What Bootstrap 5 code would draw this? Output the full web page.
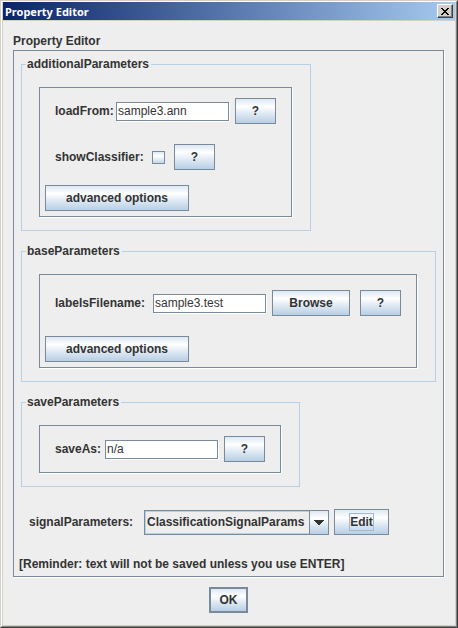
<!DOCTYPE html>
<html lang="en">
<head>
<meta charset="utf-8">
<meta name="viewport" content="width=device-width, initial-scale=1">
<title>Property Editor</title>
<link href="https://cdn.jsdelivr.net/npm/bootstrap@5.3.0/dist/css/bootstrap.min.css" rel="stylesheet">
<style>
:root { --line: #7a8a99; --soft: #b8cfe5; --face: #eeeeee; --ink: #333333; }
body { background: var(--face); color: var(--ink); font: 700 12px/17px "Liberation Sans", Arial, sans-serif; }
.window { border: 1px solid; border-color: #d4d0c8 #404040 #404040 #d4d0c8; }
.window-bevel { border: 1px solid; border-color: #fff #808080 #808080 #fff; }
.window-frame { border: solid #d4d0c8; border-width: 0 1px 1px 1px; }
.titlebar { height: 19px; padding: 0 2px; border-bottom: 1px solid #d4d0c8; background: linear-gradient(90deg, #0a246a, #a6caf0); color: #fff; }
.titlebar h1 { font: 700 11px/17px "Noto Sans", "Open Sans", sans-serif; }
.close-btn { width: 16px; height: 14px; background: #d4d0c8; border: 1px solid; border-color: #fff #404040 #404040 #fff; box-shadow: inset -1px -1px 0 #808080; }
.client { padding: 12px 11px 12px 10px; }
.sunken { border: 1px solid var(--line); box-shadow: 1px 1px 0 #fff; }
.editor { padding: 5px 7px 3px; margin-bottom: 10px; }
.group { border: 1px solid var(--soft); padding: 0 4px 13px; margin-bottom: 12px; width: fit-content; }
.group legend { float: none; width: auto; margin: 0; padding: 0 2px 0 1px; font-size: 12px; line-height: 17px; }
.group-body { margin: 14px 14px 0 13px; padding: 10px 15px; }
.group-body.tall { padding: 15px 15px 5px; }
.group-body.has-more { padding-bottom: 5px; }
.group-body label, .signal label { padding-top: 1px; }
.more { margin: 0 0 0 -10px; width: 144px; }
.jbtn { height: 26px; padding: 0; border: 1px solid var(--line); border-radius: 0; color: var(--ink); font: inherit; background: linear-gradient(#dde8f3 0, #fff 32%, #dde8f3 62%, #b8cfe5 100%); }
.help { width: 41px; }
.browse { width: 78px; }
.edit { width: 55px; }
.edit span { display: inline-block; height: 18px; line-height: 18px; outline: 1px solid #a3b8cc; outline-offset: -1px; padding: 0 1px; }
.ok { width: 39px; border-width: 2px; }
.field { width: 113px; height: 19px; padding: 0 1px; border-radius: 0; background: #fff; color: var(--ink); font: 400 12px/17px "Liberation Sans", Arial, sans-serif; outline: 0; }
.gap-field { gap: 6px; }
.row-gap { margin-bottom: 20px; }
.row-near { margin-bottom: 15px; }
.lbl-s { width: 50px; }
.lbl-m { width: 61px; }
.lbl-check { width: 97px; }
.lbl-l { width: 98px; }
.lbl-xl { width: 110px; }
.tick { appearance: none; width: 13px; height: 13px; margin: 0 9px 0 0; border: 1px solid var(--line); background: linear-gradient(#dde8f3, #fff 35%, #c5d8ea); }
.tick:checked { background: var(--line); }
.signal { padding: 0 0 0 8px; margin: 22px 0 21px; gap: 5px; }
.combo { width: 185px; height: 25px; }
.combo select { appearance: none; width: 100%; height: 100%; padding: 0 20px 0 2px; border: 1px solid var(--line); border-radius: 0; color: var(--ink); font: inherit; background: var(--face); box-shadow: inset 0 0 0 1px var(--soft); outline: 0; }
.combo-arrow { top: 1px; right: 1px; bottom: 1px; width: 19px; border-left: 1px solid var(--line); pointer-events: none; background: linear-gradient(#dde8f3 0, #fff 32%, #dde8f3 62%, #b8cfe5 100%); }
.note { margin: 0 0 0 -2px; }
</style>
<script src="https://cdn.jsdelivr.net/npm/bootstrap@5.3.0/dist/js/bootstrap.bundle.min.js"></script>
</head>
<body>
<div class="window min-vh-100 d-flex flex-column">
 <div class="window-bevel flex-grow-1 d-flex flex-column">
  <div class="window-frame flex-grow-1">
   <header class="titlebar d-flex align-items-center justify-content-between">
    <h1 class="m-0">Property Editor</h1>
    <button type="button" class="close-btn p-0 d-flex align-items-center justify-content-center" aria-label="Close">
     <svg width="8" height="7" viewBox="0 0 8 7" shape-rendering="crispEdges" aria-hidden="true"><path d="M0 0h2v1h1v1h2V1h1V0h2v1H7v1H6v1H5v1h1v1h1v1h1v1H6V6H5V5H3v1H2v1H0V6h1V5h1V4h1V3H2V2H1V1H0z"/></svg>
    </button>
   </header>
   <main class="client">
    <form onsubmit="return false">
     <div>Property Editor</div>
     <section class="sunken editor">
      <fieldset class="group">
       <legend>additionalParameters</legend>
       <div class="sunken group-body has-more">
        <div class="d-flex align-items-center row-gap">
         <label class="lbl-m" for="loadFrom">loadFrom:</label>
         <div class="d-flex align-items-center gap-field">
          <input class="sunken field" id="loadFrom" type="text" value="sample3.ann">
          <button type="button" class="btn jbtn help">?</button>
         </div>
        </div>
        <div class="d-flex align-items-center row-near">
         <label class="lbl-check" for="showClassifier">showClassifier:</label>
         <input class="tick" id="showClassifier" type="checkbox">
         <button type="button" class="btn jbtn help">?</button>
        </div>
        <button type="button" class="btn jbtn more d-block">advanced options</button>
       </div>
      </fieldset>
      <fieldset class="group">
       <legend>baseParameters</legend>
       <div class="sunken group-body tall">
        <div class="d-flex align-items-center row-gap">
         <label class="lbl-l" for="labelsFilename">labelsFilename:</label>
         <div class="d-flex align-items-center gap-field">
          <input class="sunken field" id="labelsFilename" type="text" value="sample3.test">
          <button type="button" class="btn jbtn browse">Browse</button>
          <button type="button" class="btn jbtn help ms-1">?</button>
         </div>
        </div>
        <button type="button" class="btn jbtn more d-block">advanced options</button>
       </div>
      </fieldset>
      <fieldset class="group">
       <legend>saveParameters</legend>
       <div class="sunken group-body">
        <div class="d-flex align-items-center">
         <label class="lbl-s" for="saveAs">saveAs:</label>
         <div class="d-flex align-items-center gap-field">
          <input class="sunken field" id="saveAs" type="text" value="n/a">
          <button type="button" class="btn jbtn help">?</button>
         </div>
        </div>
       </div>
      </fieldset>
      <div class="signal d-flex align-items-center">
       <label class="lbl-xl" for="signalParameters">signalParameters:</label>
       <div class="combo position-relative">
        <select id="signalParameters"><option>ClassificationSignalParams</option></select>
        <span class="combo-arrow position-absolute d-flex align-items-center justify-content-center" aria-hidden="true">
         <svg width="10" height="5" viewBox="0 0 10 5" shape-rendering="crispEdges"><path fill="#333" d="M0 0h10v1H9v1H8v1H7v1H6v1H4V4H3V3H2V2H1V1H0z"/></svg>
        </span>
       </div>
       <button type="button" class="btn jbtn edit"><span>Edit</span></button>
      </div>
      <p class="note">[Reminder: text will not be saved unless you use ENTER]</p>
     </section>
     <div class="text-center d-flex justify-content-center">
      <button type="submit" class="btn jbtn ok">OK</button>
     </div>
    </form>
   </main>
  </div>
 </div>
</div>
</body>
</html>
